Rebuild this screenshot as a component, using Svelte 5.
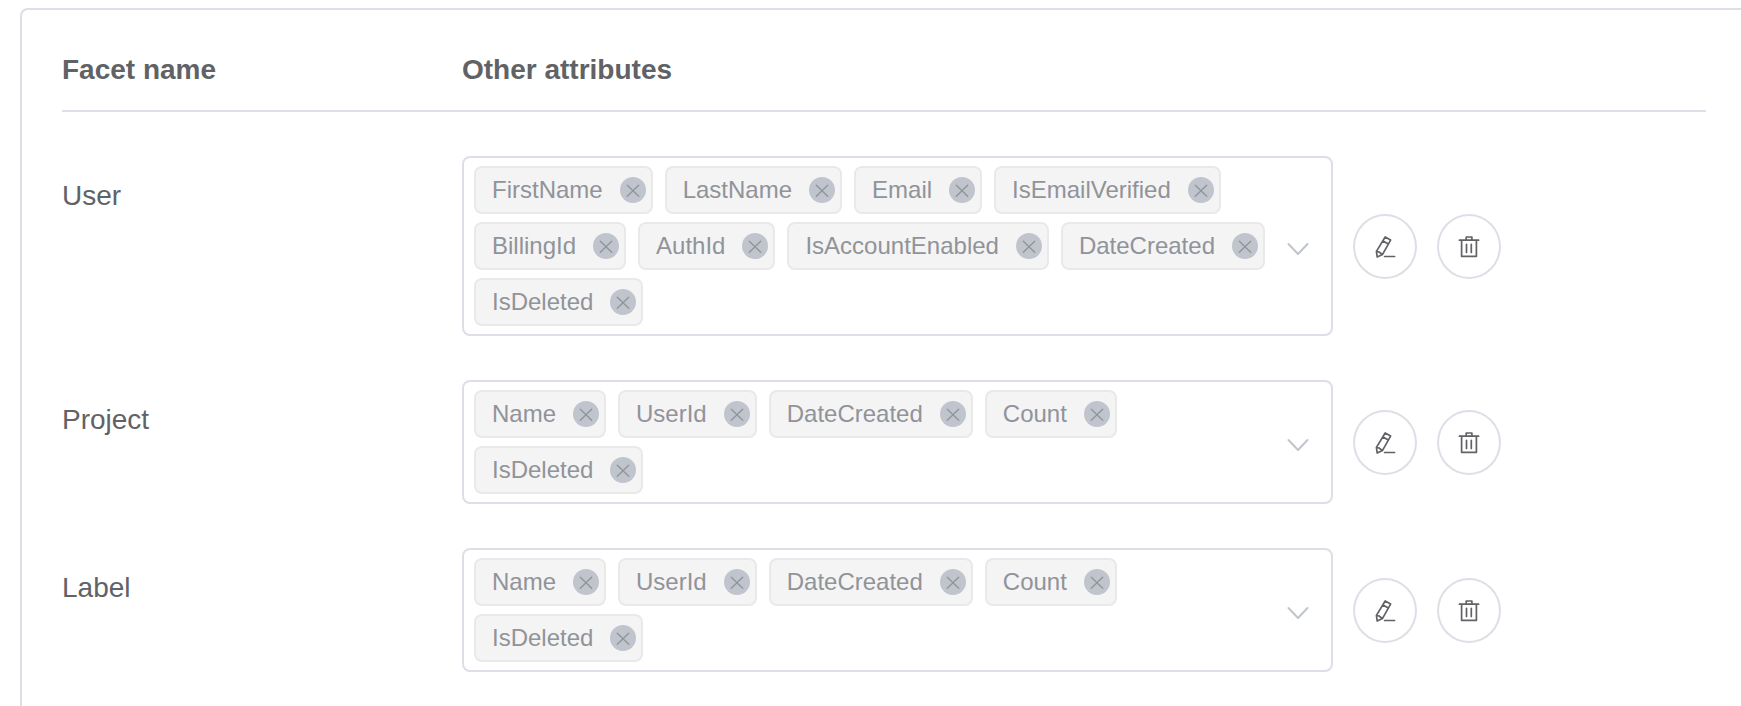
<script>
  let facets = $state([
    {
      name: 'User',
      attributes: [
        'FirstName',
        'LastName',
        'Email',
        'IsEmailVerified',
        'BillingId',
        'AuthId',
        'IsAccountEnabled',
        'DateCreated',
        'IsDeleted'
      ]
    },
    { name: 'Project', attributes: ['Name', 'UserId', 'DateCreated', 'Count', 'IsDeleted'] },
    { name: 'Label', attributes: ['Name', 'UserId', 'DateCreated', 'Count', 'IsDeleted'] }
  ]);

  function removeAttribute(facet, attribute) {
    facet.attributes = facet.attributes.filter((a) => a !== attribute);
  }

  function removeFacet(facet) {
    facets = facets.filter((f) => f.name !== facet.name);
  }
</script>

<main class="page">
  <section class="panel">
    <table class="facets">
      <thead>
        <tr>
          <th class="name-col" scope="col">Facet name</th>
          <th scope="col">Other attributes</th>
          <td class="actions-col"></td>
        </tr>
      </thead>
      <tbody>
        {#each facets as facet (facet.name)}
          <tr>
            <th class="name" scope="row">{facet.name}</th>
            <td>
              <div class="select">
                <ul class="tags">
                  {#each facet.attributes as attribute (attribute)}
                    <li class="tag">
                      <span>{attribute}</span>
                      <button
                        class="close"
                        type="button"
                        aria-label="Remove {attribute}"
                        onclick={() => removeAttribute(facet, attribute)}
                      >
                        <svg viewBox="0 0 26 26" aria-hidden="true">
                          <path d="M7.3 8.3 18.7 19.3M18.7 8.3 7.3 19.3" />
                        </svg>
                      </button>
                    </li>
                  {/each}
                </ul>
                <button class="caret" type="button" aria-haspopup="listbox" aria-label="{facet.name} attributes">
                  <svg viewBox="0 0 24 16" aria-hidden="true">
                    <path d="M2.5 3 12 13 21.5 3" />
                  </svg>
                </button>
              </div>
            </td>
            <td>
              <div class="actions">
                <button class="round" type="button" aria-label="Edit {facet.name}">
                  <svg viewBox="0 0 28 28" aria-hidden="true">
                    <path d="M14.2 4 19.6 7.1 11.4 21.6 6.2 24 5.4 18.4ZM12 8 17.3 11.1M5.4 18.4 8.1 19 11.4 21.6M13.6 23.5H23.6" />
                  </svg>
                </button>
                <button
                  class="round"
                  type="button"
                  aria-label="Delete {facet.name}"
                  onclick={() => removeFacet(facet)}
                >
                  <svg viewBox="0 0 28 28" aria-hidden="true">
                    <path d="M4.4 7.2H23.6M6.6 7.2V23.3H21.4V7.2M11.2 7.2V4H16.9V7.2M11.5 11.4V19.4M16.3 11.4V19.4" />
                  </svg>
                </button>
              </div>
            </td>
          </tr>
        {/each}
      </tbody>
    </table>
  </section>
</main>

<style>
  :global(body) {
    margin: 0;
    background: #fff;
  }

  .page {
    box-sizing: border-box;
    min-height: 100vh;
    display: flex;
    padding: 8px 0 0 20px;
    color: #606266;
    font-family: 'Liberation Sans', Arial, sans-serif;
    font-size: 28px;
    line-height: 32px;
  }

  .panel {
    flex: 1;
    min-width: 0;
    padding: 44px 35px 0 40px;
    border: 2px solid #dcdfe6;
    border-width: 2px 0 0 2px;
    border-top-left-radius: 8px;
  }

  .facets {
    width: 100%;
    table-layout: fixed;
    border-spacing: 0;
  }

  th,
  td {
    padding: 0;
    text-align: left;
  }

  thead th,
  thead td {
    padding-bottom: 24px;
    border-bottom: 2px solid #dcdfe6;
  }

  .name-col {
    width: 400px;
  }

  .actions-col {
    width: 373px;
  }

  tbody td {
    padding-top: 44px;
  }

  .name {
    padding-top: 68px;
    font-weight: normal;
    vertical-align: top;
  }

  .select {
    display: flex;
    align-items: center;
    padding: 8px 10px;
    border: 2px solid #dcdfe6;
    border-radius: 8px;
  }

  .tags {
    flex: 1;
    min-width: 0;
    display: flex;
    flex-wrap: wrap;
    gap: 8px 12px;
    margin: 0;
    padding: 0;
    list-style: none;
  }

  .tag {
    box-sizing: border-box;
    height: 48px;
    display: flex;
    align-items: center;
    gap: 17px;
    padding: 0 5px 0 16px;
    border: 2px solid #e9e9e9;
    border-radius: 8px;
    background: #f4f4f4;
    color: #909399;
    font-size: 24px;
    line-height: 44px;
  }

  button {
    padding: 0;
    border: 0;
    background: none;
    color: inherit;
    cursor: pointer;
  }

  svg {
    display: block;
    fill: none;
    stroke: currentColor;
    stroke-linecap: round;
    stroke-linejoin: round;
  }

  .close {
    width: 26px;
    height: 26px;
    border-radius: 50%;
    background: #c0c4cc;
  }

  .close svg {
    width: 26px;
    height: 26px;
    stroke-width: 1.3;
  }

  .caret {
    margin: 6px 11px 0 16px;
    color: #c0c4cc;
  }

  .caret svg {
    width: 24px;
    height: 16px;
    stroke-width: 2;
  }

  .actions {
    display: flex;
    gap: 20px;
    padding: 1px 0 0 20px;
  }

  .round {
    box-sizing: border-box;
    width: 64px;
    height: 65px;
    display: flex;
    align-items: center;
    justify-content: center;
    border: 2px solid #dcdfe6;
    border-radius: 50%;
    background: #fff;
  }

  .round svg {
    width: 28px;
    height: 28px;
    stroke-width: 1.7;
  }
</style>
